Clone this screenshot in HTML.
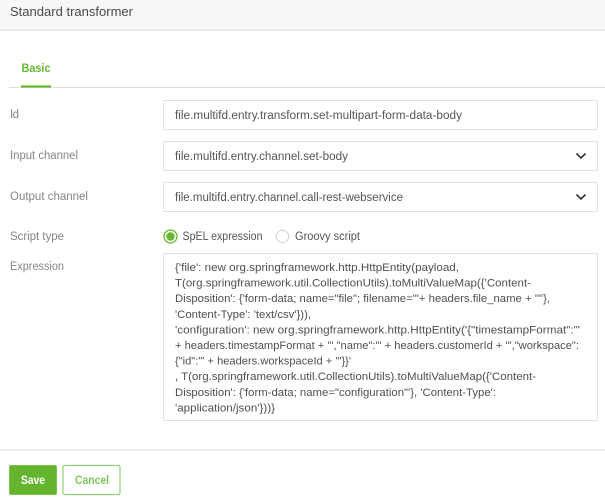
<!DOCTYPE html>
<html><head><meta charset="utf-8"><style>
html,body{margin:0;padding:0;background:#fff;width:605px;height:499px;overflow:hidden}
svg{display:block}
text{font-family:"Liberation Sans",sans-serif;font-size:11.5px}
.l{fill:#858585}.v{fill:#555}.t{font-size:11.3px;fill:#4f4f4f}
</style></head><body>
<svg width="605" height="499" viewBox="0 0 605 499" xmlns="http://www.w3.org/2000/svg">
<rect width="605" height="30" fill="#f7f7f7"/>
<rect y="29.5" width="605" height="1.5" fill="#e9e9e9"/>
<text x="10" y="16" textLength="123" lengthAdjust="spacingAndGlyphs" style="font-size:12.5px" fill="#4a4a4a">Standard transformer</text>
<text x="21.5" y="72" textLength="29" lengthAdjust="spacingAndGlyphs" style="font-size:12px;font-weight:bold" fill="#63b82f">Basic</text>
<rect x="9" y="87" width="596" height="1" fill="#dedede"/>
<rect x="21" y="85.5" width="30" height="2" fill="#5db51f"/>

<text class="l" x="10" y="118" textLength="9">Id</text>
<rect x="163.5" y="100.5" width="434" height="29" rx="1.5" fill="#fff" stroke="#e2e2e2"/>
<text class="v" x="175" y="119" textLength="287" lengthAdjust="spacingAndGlyphs">file.multifd.entry.transform.set-multipart-form-data-body</text>

<text class="l" x="10" y="159" textLength="68" lengthAdjust="spacingAndGlyphs">Input channel</text>
<rect x="163.5" y="141.5" width="434" height="29" rx="1.5" fill="#fff" stroke="#e2e2e2"/>
<text class="v" x="175" y="160" textLength="173" lengthAdjust="spacingAndGlyphs">file.multifd.entry.channel.set-body</text>
<path d="M576.5 153.5l4.5 4.5 4.5-4.5" fill="none" stroke="#333" stroke-width="1.6"/>

<text class="l" x="10" y="200" textLength="78" lengthAdjust="spacingAndGlyphs">Output channel</text>
<rect x="163.5" y="182.5" width="434" height="29" rx="1.5" fill="#fff" stroke="#e2e2e2"/>
<text class="v" x="175" y="201" textLength="228" lengthAdjust="spacingAndGlyphs">file.multifd.entry.channel.call-rest-webservice</text>
<path d="M576.5 194.5l4.5 4.5 4.5-4.5" fill="none" stroke="#333" stroke-width="1.6"/>

<text class="l" x="10" y="240" textLength="54" lengthAdjust="spacingAndGlyphs">Script type</text>
<circle cx="170.5" cy="236.5" r="6.5" fill="#fff" stroke="#67b92f" stroke-width="1.3"/>
<circle cx="170.5" cy="236.5" r="4.2" fill="#67b92f"/>
<text class="v" x="182.5" y="240" textLength="80" lengthAdjust="spacingAndGlyphs">SpEL expression</text>
<circle cx="282.5" cy="236.5" r="6.2" fill="#fff" stroke="#d8d8d8" stroke-width="1.2"/>
<text class="v" x="295" y="240" textLength="65" lengthAdjust="spacingAndGlyphs">Groovy script</text>

<text class="l" x="10" y="270" textLength="54" lengthAdjust="spacingAndGlyphs">Expression</text>
<rect x="163.5" y="253.5" width="434" height="167" rx="1.5" fill="#fff" stroke="#e2e2e2"/>
<text class="t" x="175" y="271" textLength="284" lengthAdjust="spacingAndGlyphs">{'file': new org.springframework.http.HttpEntity(payload,</text>
<text class="t" x="175" y="286.6" textLength="356" lengthAdjust="spacingAndGlyphs">T(org.springframework.util.CollectionUtils).toMultiValueMap({'Content-</text>
<text class="t" x="175" y="302.2" textLength="375" lengthAdjust="spacingAndGlyphs">Disposition': {'form-data; name="file"; filename="'+ headers.file_name + '"'},</text>
<text class="t" x="175" y="317.8" textLength="136" lengthAdjust="spacingAndGlyphs">'Content-Type': 'text/csv'})),</text>
<text class="t" x="175" y="333.4" textLength="405" lengthAdjust="spacingAndGlyphs">'configuration': new org.springframework.http.HttpEntity('{"timestampFormat":"'</text>
<text class="t" x="175" y="349" textLength="404" lengthAdjust="spacingAndGlyphs">+ headers.timestampFormat + '","name":"' + headers.customerId + '","workspace":</text>
<text class="t" x="175" y="364.6" textLength="176" lengthAdjust="spacingAndGlyphs">{"id":"' + headers.workspaceId + '"}}'</text>
<text class="t" x="175" y="380.2" textLength="361" lengthAdjust="spacingAndGlyphs">, T(org.springframework.util.CollectionUtils).toMultiValueMap({'Content-</text>
<text class="t" x="175" y="395.8" textLength="321" lengthAdjust="spacingAndGlyphs">Disposition': {'form-data; name="configuration"'}, 'Content-Type':</text>
<text class="t" x="175" y="411.4" textLength="100" lengthAdjust="spacingAndGlyphs">'application/json'}))}</text>

<rect y="449" width="605" height="1.5" fill="#e6e6e6"/>
<rect x="9.5" y="465.5" width="47" height="29" rx="1.5" fill="#64b52d" stroke="#7cc04e"/>
<text x="21" y="484" textLength="24" lengthAdjust="spacingAndGlyphs" style="font-size:11.5px;font-weight:bold" fill="#fff">Save</text>
<rect x="63" y="465.5" width="57" height="29" rx="1.5" fill="#fff" stroke="#97d078" stroke-width="1.2"/>
<text x="75" y="484" textLength="34" lengthAdjust="spacingAndGlyphs" style="font-size:11.5px;font-weight:bold" fill="#7ec75a">Cancel</text>
</svg>
</body></html>
